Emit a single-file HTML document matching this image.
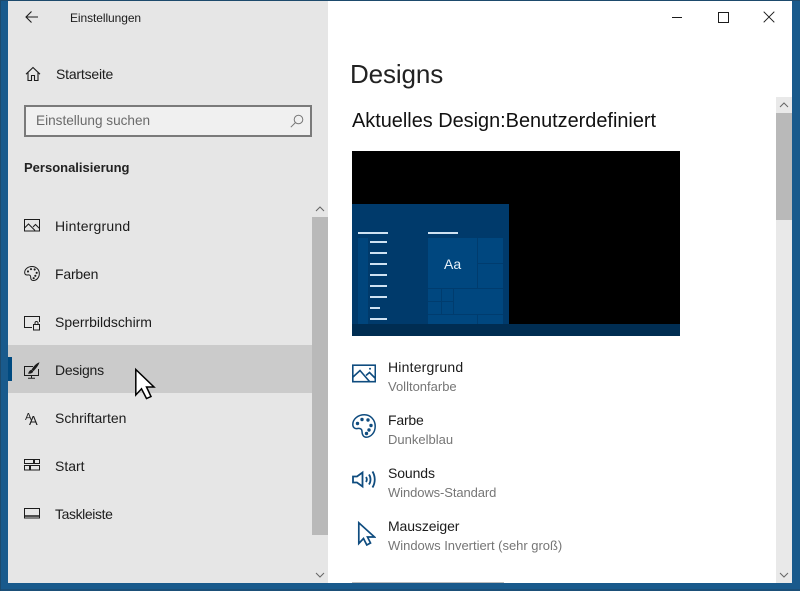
<!DOCTYPE html>
<html lang="de">
<head>
<meta charset="utf-8">
<title>Einstellungen</title>
<style>
html,body{margin:0;padding:0;width:800px;height:591px;overflow:hidden;background:#195a8c;font-family:"Liberation Sans",sans-serif;}
div,span,svg{position:absolute;}
.t{white-space:nowrap;line-height:20px;height:20px;color:#1c1c1c;font-size:14px;}
.n{left:55px;}
.m{left:388px;}
.s{left:388px;color:#767676;font-size:13px;}
</style>
</head>
<body>
<div style="left:0;top:0;width:800px;height:1px;background:#1d4a6c"></div>
<div style="left:0;top:589px;width:800px;height:2px;background:#1b4f78"></div>
<div style="left:0;top:0;width:1px;height:591px;background:#1d4a6c"></div>

<!-- window -->
<div style="left:8px;top:1px;width:784px;height:582px;background:#fff"></div>
<div style="left:8px;top:1px;width:320px;height:582px;background:#e6e6e6"></div>

<!-- header -->
<svg style="left:24px;top:9px" width="16" height="16" viewBox="0 0 16 16" fill="none" stroke="#1c1c1c" stroke-width="1.1"><path d="M2 8H14M7.500 2.500L2 8l5.500 5.500"/></svg>
<div class="t" style="left:70px;top:8px;font-size:12px;letter-spacing:-.08px">Einstellungen</div>
<svg style="left:25px;top:66px" width="16" height="16" viewBox="0 0 16 16" fill="none" stroke="#1c1c1c" stroke-width="1.1"><path d="M1 8.200L8 1.500l7 6.700M3 6.500V14.500H6.500V9.500H9.500V14.500H13V6.500"/></svg>
<div class="t" style="left:56px;top:64px;letter-spacing:-.2px">Startseite</div>

<!-- search -->
<div style="left:24px;top:105px;width:284px;height:28px;background:#f0f0f0;border:2px solid #7a7a7a"></div>
<div class="t" style="left:36px;top:111px;color:#6a6a6a;font-size:13.600px">Einstellung suchen</div>
<svg style="left:290px;top:114px" width="14" height="14" viewBox="0 0 14 14" fill="none" stroke="#777" stroke-width="1"><circle cx="8.500" cy="5.500" r="4.300"/><path d="M5.400 8.600L.8 13.200"/></svg>

<div class="t" style="left:24px;top:158px;font-weight:bold;font-size:13px;color:#222">Personalisierung</div>

<!-- selected row -->
<div style="left:8px;top:345px;width:304px;height:48px;background:#cbcbcb"></div>
<div style="left:8px;top:357px;width:4px;height:24px;background:#004a80"></div>

<!-- nav items -->
<svg style="left:24px;top:218px" width="16" height="15" viewBox="0 0 16 15" fill="none" stroke="#1c1c1c" stroke-width="1"><rect x=".5" y="1.500" width="15" height="11.500"/><path d="M.5 10l4-4 6.500 6.500M9 9l2.500-2.500 4 4"/></svg>
<div class="t n" style="top:216px;letter-spacing:.2px">Hintergrund</div>

<svg style="left:24px;top:265px" width="16" height="17" viewBox="0 0 24 24" fill="none" stroke="#1c1c1c" stroke-width="1.500"><path d="M12 1.500C6 1.500 1 5.500 1 10.500c0 3 2 4 4.500 3.700 2.500-.3 4.500.3 4.500 3 0 2.500 1 5.300 4 5.300 5 0 9-4.500 9-10.500S18 1.500 12 1.500z"/><g fill="#1c1c1c" stroke="none"><circle cx="6" cy="9" r="1.600"/><circle cx="10.500" cy="5.500" r="1.600"/><circle cx="16" cy="6" r="1.600"/><circle cx="19" cy="11" r="1.600"/><circle cx="17" cy="15.500" r="1.600"/><circle cx="14.500" cy="19" r="1.600"/></g></svg>
<div class="t n" style="top:264px;letter-spacing:-.2px">Farben</div>

<svg style="left:24px;top:315px" width="16" height="16" viewBox="0 0 16 16" fill="none" stroke="#1c1c1c" stroke-width="1"><path d="M8 12.500H.5V1.500H15.500V7"/><rect x="9.500" y="9.500" width="6" height="5.500"/><path d="M11 9.500V8a1.500 1.500 0 0 1 3 0v1.500"/></svg>
<div class="t n" style="top:312px;letter-spacing:-.02px">Sperrbildschirm</div>

<svg style="left:24px;top:362px" width="16" height="17" viewBox="0 0 16 17" fill="none" stroke="#1c1c1c" stroke-width="1"><path d="M9 4.500H.5V13.500H14.500V7M7.500 13.500V16M4 16.300H11"/><path d="M15 .8C12 2 9.500 5 8 7.500l1.500 1.200C11.500 6.500 14 4 15 .8zM7.800 8C6 8.300 5 9.500 4.500 11.500c2 0 4-.5 4.500-2.500" fill="#1c1c1c" stroke-width=".6"/></svg>
<div class="t n" style="top:360px;letter-spacing:-.25px">Designs</div>

<div class="t" style="left:25px;top:411px;font-size:10px;height:14px;line-height:14px">A</div>
<div class="t" style="left:29px;top:413px;font-size:13px;height:16px;line-height:16px">A</div>
<div class="t n" style="top:408px;letter-spacing:-.02px">Schriftarten</div>

<svg style="left:24px;top:459px" width="16" height="12" viewBox="0 0 16 12" fill="none" stroke="#1c1c1c" stroke-width="1"><rect x=".5" y=".5" width="9" height="4"/><rect x="10.500" y=".5" width="5" height="4"/><rect x=".5" y="6.500" width="5" height="4.500"/><rect x="6.500" y="6.500" width="9" height="4.500"/></svg>
<div class="t n" style="top:456px">Start</div>

<svg style="left:24px;top:508px" width="16" height="11" viewBox="0 0 16 11" fill="none" stroke="#1c1c1c" stroke-width="1"><rect x=".5" y=".5" width="15" height="9.500"/><path d="M0 8H16" stroke-width="1.500"/></svg>
<div class="t n" style="top:504px;letter-spacing:-.4px">Taskleiste</div>

<!-- left scrollbar -->
<div style="left:312px;top:217px;width:16px;height:318px;background:#b9b9b9"></div>
<svg style="left:312px;top:201px" width="16" height="16" viewBox="0 0 16 16" fill="none" stroke="#666" stroke-width="1"><path d="M4 10l4-4 4 4"/></svg>
<svg style="left:312px;top:567px" width="16" height="16" viewBox="0 0 16 16" fill="none" stroke="#666" stroke-width="1"><path d="M4 6l4 4 4-4"/></svg>

<!-- cursor -->
<svg style="left:130px;top:364px" width="30" height="40" viewBox="0 0 30 40"><path d="M5.800 5.500V31L11.500 24.800 16.500 34.500 21 32.500 16.500 23H24z" fill="#fff" stroke="#000" stroke-width="1.500"/></svg>

<!-- window buttons -->
<div style="left:672px;top:17px;width:10px;height:1px;background:#1c1c1c"></div>
<div style="left:718px;top:12px;width:9px;height:9px;border:1px solid #1c1c1c"></div>
<svg style="left:763px;top:11px" width="12" height="12" viewBox="0 0 12 12" stroke="#1c1c1c" stroke-width="1"><path d="M.7.700l10.600 10.600M11.300.700L.7 11.300"/></svg>

<!-- content -->
<div class="t" style="left:350px;top:58px;font-size:26px;height:32px;line-height:32px;color:#222;letter-spacing:-.12px">Designs</div>
<div class="t" style="left:352px;top:109px;font-size:19.900px;height:24px;line-height:24px;color:#111">Aktuelles Design:Benutzerdefiniert</div>

<!-- preview -->
<div style="left:352px;top:151px;width:328px;height:185px;background:#000"></div>
<div style="left:352px;top:204px;width:157px;height:120px;background:#003a6b"></div>
<div style="left:352px;top:324px;width:328px;height:12px;background:#002d52"></div>
<div style="left:358px;top:238px;width:10px;height:86px;background:#00457c"></div>
<div style="left:358px;top:232px;width:30px;height:2px;background:#cfe2f2"></div>
<div style="left:370px;top:241px;width:17px;height:2px;background:#cfe2f2"></div>
<div style="left:370px;top:252px;width:17px;height:2px;background:#cfe2f2"></div>
<div style="left:370px;top:263px;width:17px;height:2px;background:#cfe2f2"></div>
<div style="left:370px;top:274px;width:17px;height:2px;background:#cfe2f2"></div>
<div style="left:370px;top:285px;width:17px;height:2px;background:#cfe2f2"></div>
<div style="left:370px;top:296px;width:17px;height:2px;background:#cfe2f2"></div>
<div style="left:370px;top:307px;width:10px;height:2px;background:#cfe2f2"></div>
<div style="left:370px;top:318px;width:17px;height:2px;background:#cfe2f2"></div>
<div style="left:428px;top:232px;width:30px;height:2px;background:#cfe2f2"></div>
<div style="left:428px;top:238px;width:75px;height:86px;background:#00477f"></div>
<svg style="left:428px;top:238px" width="75" height="86" viewBox="0 0 75 86" fill="none" stroke="#003c6e" stroke-width="1"><path d="M49.500 0V50M49.500 25.500H75M0 50.500H75M13.500 50V76M25.500 50V76M0 63.500H25.500M0 76.500H75M49.500 76V86"/></svg>
<div class="t" style="left:444px;top:254px;font-size:14px;color:#e8f2fa">Aa</div>

<!-- list -->
<svg style="left:352px;top:364px" width="24" height="19" viewBox="0 0 24 19" fill="none" stroke="#0f4c7f" stroke-width="1.600"><rect x=".8" y="1.200" width="22.500" height="16.500"/><path d="M1 13l7-6.500 9.500 11M14 11.500l3.500-3 6 6"/><circle cx="18" cy="4.800" r="1" fill="#0f4c7f" stroke="none"/></svg>
<div class="t m" style="top:357px;letter-spacing:.2px">Hintergrund</div>
<div class="t s" style="top:377px">Volltonfarbe</div>

<svg style="left:352px;top:414px" width="24" height="24" viewBox="0 0 24 24" fill="none" stroke="#0f4c7f" stroke-width="1.500"><path d="M12.500 .8C6 .8.800 5 .8 10.500c0 3 2 4.500 4.700 4 2.500-.3 4.500.3 4.500 3 0 3 1.500 5.700 4 5.700 5 0 9.200-4.700 9.200-11S18.500.8 12.500.8z"/><g fill="#0f4c7f" stroke="none"><circle cx="5.500" cy="9.500" r="1.700"/><circle cx="10" cy="5.500" r="1.700"/><circle cx="16" cy="6" r="1.700"/><circle cx="19" cy="11.500" r="1.700"/><circle cx="17" cy="16" r="1.700"/><circle cx="14.500" cy="19.500" r="1.700"/></g></svg>
<div class="t m" style="top:410px;letter-spacing:-.2px">Farbe</div>
<div class="t s" style="top:430px">Dunkelblau</div>

<svg style="left:352px;top:469px" width="24" height="21" viewBox="0 0 24 21" fill="none" stroke="#0f4c7f" stroke-width="1.800"><path d="M1 7.500H5L10.500 3.500V17.500L5 13.500H1z"/><path d="M14 8c1 1.500 1 3.500 0 5M17 5.500c2 3 2 7 0 10M20.500 2.500c3 5 3 11 0 16"/></svg>
<div class="t m" style="top:463px;letter-spacing:-.1px">Sounds</div>
<div class="t s" style="top:483px;letter-spacing:-.1px">Windows-Standard</div>

<svg style="left:356px;top:520px" width="20" height="28" viewBox="0 0 20 28" fill="none" stroke="#0f4c7f" stroke-width="1.700"><path d="M2.800 2.800V23.500L7.500 18.500 10.800 25 14.500 23 11.500 17H18.500z"/></svg>
<div class="t m" style="top:516px;letter-spacing:-.1px">Mauszeiger</div>
<div class="t s" style="top:536px;letter-spacing:-.02px">Windows Invertiert (sehr groß)</div>

<div style="left:352px;top:582px;width:152px;height:1px;background:#bdbdbd"></div>

<!-- right scrollbar -->
<div style="left:776px;top:97px;width:16px;height:486px;background:#e9e9e9"></div>
<div style="left:776px;top:113px;width:16px;height:107px;background:#b9b9b9"></div>
<svg style="left:776px;top:97px" width="16" height="16" viewBox="0 0 16 16" fill="none" stroke="#666" stroke-width="1"><path d="M4 10l4-4 4 4"/></svg>
<svg style="left:776px;top:567px" width="16" height="16" viewBox="0 0 16 16" fill="none" stroke="#666" stroke-width="1"><path d="M4 6l4 4 4-4"/></svg>
</body>
</html>
